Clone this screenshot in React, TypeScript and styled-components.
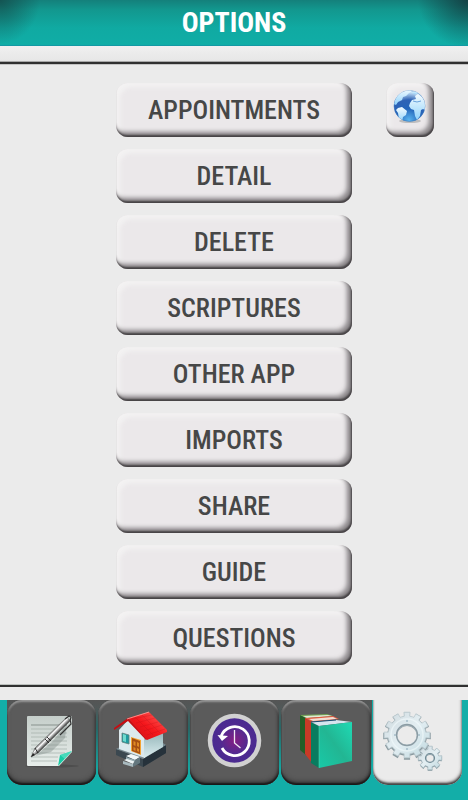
import React from "react";
import styled, { createGlobalStyle, css } from "styled-components";

const GlobalStyle = createGlobalStyle`
  *, *::before, *::after { box-sizing: border-box; }
  html, body { margin: 0; padding: 0; background: #ebebeb; }
  body, button { font-family: "Roboto Condensed", "Liberation Sans Narrow", "DejaVu Sans Condensed", sans-serif; }
`;

const Page = styled.div`
  display: flex;
  flex-direction: column;
  min-height: 100vh;
  background: #ebebeb;
`;

const Header = styled.header`
  display: flex;
  align-items: center;
  justify-content: center;
  height: 46px;
  border-bottom: 1px solid #1399a4;
  background:
    radial-gradient(ellipse 50px 48px at 100% 0, rgba(20, 50, 55, 0.8), transparent),
    radial-gradient(ellipse 40px 44px at 0 0, rgba(20, 60, 60, 0.65), transparent),
    linear-gradient(#14807b 0, #12988f 10px, #10aaa2 28px, #10ada6 100%);
`;

const Title = styled.h1`
  margin: 0;
  color: #fff;
  font-size: 28px;
  line-height: 46px;
  font-weight: 700;
`;

const Rule = styled.hr<{ $heavy?: boolean }>`
  width: 100%;
  height: 2px;
  margin: 0;
  border: 0;
  background: #303030;
  ${(p) =>
    p.$heavy
      ? css`box-shadow: 0 -1px 0 #a8a8a8, 0 1px 0 #c4c4c4;`
      : css`box-shadow: 0 -1px 0 #bcc0bd;`}
`;

const HeaderGap = styled.div`
  height: 16px;
  background: linear-gradient(#f0f0f0, #e6e6e6);
`;

const Main = styled.main`
  flex: 1;
  display: grid;
  grid-template-columns: 1fr 236px 1fr;
  align-items: start;
  padding: 19px 0 19px;
`;

const Menu = styled.nav`
  grid-column: 2;
  display: flex;
  flex-direction: column;
  gap: 12px;
`;

const bevel = css`
  border: 0;
  padding: 0;
  background: #ebe8ea;
  border-radius: 12px;
  box-shadow:
    inset -1px -2px 2px #454244,
    inset -4px -4px 4px #8b878a,
    inset -5px -5px 5px #b5b1b4,
    inset 4px 4px 4px #f3f2f2;
  cursor: pointer;
`;

const MenuButton = styled.button`
  ${bevel}
  height: 54px;
  color: #464747;
  font-size: 26px;
  font-weight: 500;
  line-height: 54px;
`;

const LanguageButton = styled.button`
  ${bevel}
  justify-self: center;
  width: 48px;
  height: 54px;
  svg { display: block; }
`;

const BarGap = styled.div`
  height: 13px;
  background: #ebebeb;
`;

const TabBar = styled.nav`
  display: flex;
  gap: 2px;
  padding: 0 6px 15px 7px;
  background:
    linear-gradient(#555 0, #515858 8px, #286766 28px, #13aea8 75px) 7px 0 / calc(100% - 103px) 100% no-repeat,
    #13aea8;
`;

const Tab = styled.button<{ $active?: boolean }>`
  flex: 1;
  min-width: 0;
  display: flex;
  justify-content: center;
  height: 85px;
  padding: 0;
  border: 0;
  cursor: pointer;
  ${(p) =>
    p.$active
      ? css`
          border-radius: 0 0 15px 15px;
          background: #ebebeb;
          box-shadow: inset 0 -2px 2px #444, inset -1px -3px 3px #aaa;
        `
      : css`
          border-radius: 15px;
          background: #5b5b5b;
          box-shadow:
            inset 0 -2px 2px #171717,
            inset 0 -4px 4px #404040,
            inset 0 2px 2px #999,
            inset 2px 0 2px #6e6e6e,
            inset -2px 0 2px #484848;
        `}
  svg { flex: none; }
`;

const Globe = () => (
  <svg width="48" height="54" viewBox="0 0 48 54" aria-hidden="true">
    <defs>
      <radialGradient id="sea" cx=".48" cy=".95" r=".9">
        <stop offset="0" stopColor="#59b5ef" />
        <stop offset=".4" stopColor="#2466bb" />
        <stop offset=".72" stopColor="#2e62b5" />
        <stop offset="1" stopColor="#cbe7fa" />
      </radialGradient>
      <linearGradient id="land" x2="0" y2="1">
        <stop offset="0" stopColor="#f3fbff" />
        <stop offset="1" stopColor="#8fd2fb" />
      </linearGradient>
      <clipPath id="globeClip"><circle cx="23.5" cy="23" r="15.5" /></clipPath>
    </defs>
    <ellipse cx="24" cy="38" rx="11" ry="2" fill="#999" opacity=".55" />
    <circle cx="23.5" cy="23" r="15.5" fill="url(#sea)" stroke="#3975b9" strokeWidth=".5" />
    <g fill="url(#land)" clipPath="url(#globeClip)">
      <path d="M8 21l2-8 6-6 7-1 3 2-3 2-3 3-3 1-1 3-4 2-2 3z" />
      <path d="M12 25l4-1 5 4-1 4-3 2-1 5-3-3-1-6-2-3z" />
      <path d="M24 20l2-3 4-1-1-3 3-2 4 3 4 6 1 8-4-2-2 1-1 6-3 4-2-4-1-6-3-1-2-3z" />
      <path d="M26 9l4-1 2 2-4 1z" />
    </g>
    <path d="M27 18l4 1 4-1" fill="none" stroke="#4c8ed2" strokeWidth=".8" />
  </svg>
);

const NoteIcon = () => (
  <svg width="90" height="85" viewBox="0 0 90 85" aria-hidden="true">
    <defs>
      <linearGradient id="paper" x2="0" y2="1">
        <stop offset="0" stopColor="#c5ceca" />
        <stop offset="1" stopColor="#e8eeeb" />
      </linearGradient>
      <linearGradient id="pen" gradientUnits="userSpaceOnUse" x1="42" y1="34" x2="46" y2="38">
        <stop offset="0" stopColor="#666" />
        <stop offset=".35" stopColor="#fff" />
        <stop offset=".6" stopColor="#b5b5b5" />
        <stop offset="1" stopColor="#333" />
      </linearGradient>
    </defs>
    <ellipse cx="45" cy="66" rx="27" ry="1.5" fill="#4d4d4d" />
    <path d="M20 17q0-1 1-1h43q1 0 1 1v35L52 66H21q-1 0-1-1z" fill="url(#paper)" />
    <path d="M24 25h36" stroke="#87918d" strokeWidth="1" />
    <path d="M24 29h36M24 33h36M24 37h36M24 41h36M24 45h36M24 49h36M24 53h34M24 57h27M24 61h26" stroke="#a5b0ab" strokeWidth=".7" />
    <path d="M28 56l17-14 15-18-2 14-14 14z" fill="#707b77" opacity=".35" />
    <path d="M51 66l2-11 12-4z" fill="#19caa5" />
    <path d="M53 55l12-4-7 8z" fill="#65e5ca" opacity=".6" />
    <path d="M24 57l4-9L60 17l3 4-32 32z" fill="url(#pen)" stroke="#555" strokeWidth=".5" />
    <path d="M28 48l3 5M40 37l4 4M38 39l4 4" stroke="#222" strokeWidth=".9" />
    <path d="M58 19l4-3 2 1-1 4M63 19l1 5-11 11" fill="none" stroke="#333" strokeWidth="1.200" />
    <path d="M24 57l2-4 2 2z" fill="#222" />
  </svg>
);

const HouseIcon = () => (
  <svg width="90" height="85" viewBox="0 0 90 85" aria-hidden="true">
    <defs>
      <linearGradient id="roof" x1="1" y1="0" x2="0" y2="1">
        <stop offset="0" stopColor="#ff6961" />
        <stop offset=".5" stopColor="#f5171c" />
        <stop offset="1" stopColor="#c60c13" />
      </linearGradient>
      <linearGradient id="side" x2="0" y2="1">
        <stop offset="0" stopColor="#8eb0b4" />
        <stop offset="1" stopColor="#dceef0" />
      </linearGradient>
    </defs>
    <path d="M18 49l27 10 23-14v8L45 67 18 55z" fill="#3b4850" />
    <path d="M45 59l23-14v8L45 67z" fill="#26323b" />
    <path d="M18 49l27 10 23-14-3-2-43 4z" fill="#778990" />
    <path d="M21 30l9-10 17 17v21l-26-9z" fill="#dce9ed" />
    <path d="M46 37l19-7v17L46 58z" fill="url(#side)" />
    <path d="M24 33l7 2v9l-7-2z" fill="#1e9ba0" stroke="#63807c" strokeWidth=".8" />
    <path d="M25 34l3 1v7l-3-1z" fill="#70dace" />
    <path d="M33 37l10 3v15l-10-4z" fill="#f3a331" />
    <path d="M34 38l8 3v13l-8-3z" fill="#a64f14" />
    <path d="M35.500 41l2 1v4l-2-1zM39 42l2 1v4l-2-1zM35.500 47l2 1v3l-2-1zM39 48l2 1v3l-2-1z" fill="#e08a25" />
    <path d="M28 56l5-2 9 3-5 3z" fill="#f2f7f8" />
    <path d="M28 57l9 3v3l-9-3z" fill="#9aafb5" />
    <path d="M26 60l3-1 9 3-3 2z" fill="#eef5f6" />
    <path d="M25 61l10 3v3l-10-3z" fill="#a9babf" />
    <path d="M37 60l5-3v6l-7 4v-3z" fill="#64777e" />
    <path d="M30 18L16 28v2l14-9 18 19 1-1z" fill="#c80d12" />
    <path d="M30 18l21-6 18 18v2l-20 8z" fill="url(#roof)" />
    <path d="M34 19l20-4M38 23l19-5M42 27l18-5M46 31l18-6M49 35l18-6M37 17l18 18M44 15l18 18" stroke="#bd1018" strokeWidth=".5" opacity=".5" />
    <path d="M29 19l22-7" stroke="#ffaaa2" strokeWidth=".8" />
  </svg>
);

const HistoryIcon = () => (
  <svg width="90" height="85" viewBox="0 0 90 85" aria-hidden="true">
    <defs>
      <radialGradient id="dial">
        <stop offset="0" stopColor="#851e83" />
        <stop offset=".55" stopColor="#512a91" />
        <stop offset="1" stopColor="#482b90" />
      </radialGradient>
    </defs>
    <circle cx="44.500" cy="40.500" r="24.500" fill="url(#dial)" stroke="#d1d1d1" strokeWidth="4.500" />
    <path d="M32 48a14.500 14.500 0 1 0-.8-12" fill="none" stroke="#fff" strokeWidth="2.800" />
    <path d="M27.500 35l10.500 1-6 5z" fill="#fff" />
    <path d="M44.500 30v13l6 5" fill="none" stroke="#eee8f3" strokeWidth="1.300" />
  </svg>
);

const BooksIcon = () => (
  <svg width="90" height="85" viewBox="0 0 90 85" aria-hidden="true">
    <defs>
      <linearGradient id="cover" x1="1" y1="0" x2="0" y2="1">
        <stop offset="0" stopColor="#1fdab5" />
        <stop offset=".5" stopColor="#22b693" />
        <stop offset="1" stopColor="#18c9a7" />
      </linearGradient>
    </defs>
    <path d="M19 15l6 3v37l-6-5z" fill="#245e27" />
    <path d="M19 15l27-1 6 2-27 2z" fill="#72a456" />
    <path d="M22 16l25-1 4 1-25 2z" fill="#e1ead5" />
    <path d="M24 18l7 4v41l-7-9z" fill="#c83a27" />
    <path d="M24 18l28-2 6 3-27 3z" fill="#e45c42" />
    <path d="M28 19l24-2 4 2-24 2z" fill="#f1dfd3" />
    <path d="M30 22l8 4v42l-8-5z" fill="#097c5f" />
    <path d="M30 22l25-2 16 2-33 4z" fill="#d6e4ee" />
    <path d="M30 22l25-2" stroke="#174c72" strokeWidth="1" />
    <path d="M38 26l33-4v39l-33 7z" fill="url(#cover)" />
    <path d="M38 26v42" stroke="#65e0bd" strokeWidth=".8" opacity=".6" />
  </svg>
);

/** Outline of a toothed wheel with a round hole in its middle. */
function gearPath(cx: number, cy: number, outer: number, root: number, hole: number, teeth: number) {
  const points: string[] = [];
  const step = (Math.PI * 2) / teeth;
  for (let i = 0; i < teeth; i++) {
    const mid = i * step - Math.PI / 2;
    [[-0.28, root], [-0.25, outer], [0.25, outer], [0.28, root]].forEach(([turn, r]) => {
      const a = mid + turn * step;
      points.push(`${(cx + Math.cos(a) * r).toFixed(2)} ${(cy + Math.sin(a) * r).toFixed(2)}`);
    });
  }
  return `M${points.join("L")}ZM${cx - hole} ${cy}a${hole} ${hole} 0 1 0 ${hole * 2} 0a${hole} ${hole} 0 1 0 ${-hole * 2} 0Z`;
}

const GearsIcon = () => (
  <svg width="90" height="85" viewBox="0 0 90 85" aria-hidden="true">
    <defs>
      <linearGradient id="metal" x2="1" y2="1">
        <stop offset="0" stopColor="#cfdadf" />
        <stop offset=".5" stopColor="#e3eef2" />
        <stop offset="1" stopColor="#bfd8df" />
      </linearGradient>
    </defs>
    <g fillRule="evenodd" strokeLinejoin="round">
      <path d={gearPath(35, 36, 24, 20, 10, 12)} fill="#8b9ba1" />
      <path d={gearPath(35, 35, 23, 19, 10, 12)} fill="url(#metal)" stroke="#bdcacf" strokeWidth=".8" />
      <circle cx="35" cy="35" r="16" fill="none" stroke="#f2fafc" strokeWidth="1.500" opacity=".6" />
      <circle cx="35" cy="35" r="10.500" fill="none" stroke="#8c9ca4" strokeWidth="1.300" />
      <path d={gearPath(58, 59, 12, 9, 4, 8)} fill="#80949c" />
      <path d={gearPath(58, 58, 12, 9, 4, 8)} fill="url(#metal)" stroke="#a5b7be" strokeWidth=".7" />
      <circle cx="58" cy="58" r="4.500" fill="none" stroke="#718a95" strokeWidth="1.200" />
    </g>
    <path d="M34 21h2M22 35h2M34 49h2M46 35h2" stroke="#a4bcc7" strokeWidth="1.500" />
  </svg>
);

const options = ["APPOINTMENTS", "DETAIL", "DELETE", "SCRIPTURES", "OTHER APP", "IMPORTS", "SHARE", "GUIDE", "QUESTIONS"];

const tabs = [
  { label: "Notes", Icon: NoteIcon },
  { label: "Home", Icon: HouseIcon },
  { label: "History", Icon: HistoryIcon },
  { label: "Books", Icon: BooksIcon },
  { label: "Settings", Icon: GearsIcon, active: true },
];

export default function App() {
  return (
    <Page>
      <GlobalStyle />
      <Header><Title>OPTIONS</Title></Header>
      <HeaderGap />
      <Rule $heavy />
      <Main>
        <Menu aria-label="Options">
          {options.map((name) => (
            <MenuButton key={name} type="button">{name}</MenuButton>
          ))}
        </Menu>
        <LanguageButton type="button" aria-label="Language"><Globe /></LanguageButton>
      </Main>
      <Rule />
      <BarGap />
      <TabBar aria-label="Sections">
        {tabs.map(({ label, Icon, active }) => (
          <Tab key={label} type="button" aria-label={label} aria-current={active ? "page" : undefined} $active={active}>
            <Icon />
          </Tab>
        ))}
      </TabBar>
    </Page>
  );
}
